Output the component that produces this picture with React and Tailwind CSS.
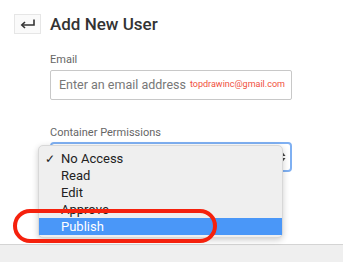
import React from 'react'

const items = ['No Access', 'Read', 'Edit', 'Approve', 'Publish']

export default function App() {
  return (
    <div className="relative w-[343px] h-[262px] overflow-hidden bg-white flex flex-col font-['Roboto',sans-serif]">
      <div className="flex-1">
        {/* Header */}
        <div className="flex items-center gap-[9px] pl-[14px] pt-[14px]">
          <div className="w-[27px] h-[20px] flex items-center justify-center border border-[#e6e6e6] bg-[#fafafa] text-[#333]">
            <svg width="16" height="10" viewBox="0 0 16 10" fill="none" stroke="#333" strokeWidth="1.6">
              <path d="M14 0.5 V6 H2" />
              <path d="M5 3 L1.8 6 L5 9" />
            </svg>
          </div>
          <h1 className="text-[17px] leading-[20px] text-[#333] font-medium">Add New User</h1>
        </div>

        {/* Form */}
        <div className="pl-[50px] w-[292px]">
          <div className="mt-[19px] text-[11px] leading-[13px] text-[#666]">Email</div>
          <div className="mt-[4px] h-[30px] border border-[#c8c8c8] rounded-[2px] flex items-center pl-[8px] gap-[4px] whitespace-nowrap overflow-hidden">
            <span className="shrink-0 text-[12.5px] text-[#777]">Enter an email address</span>
            <span className="shrink-0 text-[9px] text-[#f0503c]">topdrawinc@gmail.com</span>
          </div>

          <div className="mt-[26px] text-[11px] leading-[13px] text-[#666]">Container Permissions</div>
          <div className="mt-[3px] h-[30px] border-2 border-[#7fb0f2] rounded-[4px] flex items-center justify-end pr-[4px]">
            <svg width="7" height="12" viewBox="0 0 7 12" fill="#444">
              <path d="M3.5 1 L6.5 5 H0.5 Z" />
              <path d="M3.5 11 L6.5 7 H0.5 Z" />
            </svg>
          </div>
        </div>
      </div>

      {/* Bottom bar */}
      <div className="h-[18px] border-t border-[#d4d4d4] bg-[#efefef]" />

      {/* Native select menu */}
      <div className="absolute left-[38px] top-[145px] w-[245px] h-[93px] py-[4px] bg-[#efefef] rounded-[5px] border border-[#d8d8d8] shadow-[0_2px_6px_rgba(0,0,0,0.2)]">
        {items.map((item, i) => (
          <div
            key={item}
            className={`relative h-[17px] flex items-center pl-[22px] text-[13px] ${
              item === 'Publish' ? 'bg-[#4a97f8] text-white' : 'text-[#222]'
            }`}
          >
            {i === 0 && <span className="absolute left-[6px] text-[12px] text-[#222]">✓</span>}
            {item}
          </div>
        ))}
      </div>

      {/* Red highlight oval */}
      <div className="absolute left-[13px] top-[209px] w-[204px] h-[34px] border-4 border-[#f5210d] rounded-full" />
    </div>
  )
}
